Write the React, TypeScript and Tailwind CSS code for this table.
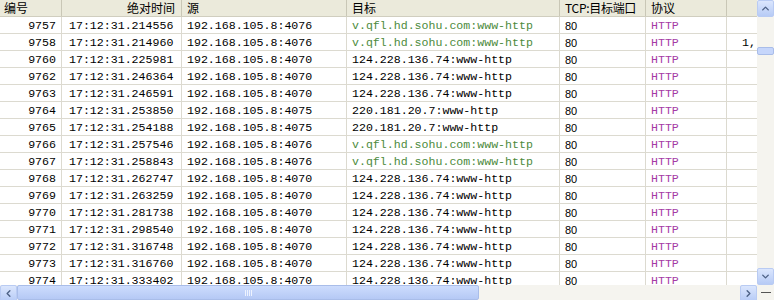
import { ChevronUp, ChevronDown, ChevronLeft, ChevronRight } from 'lucide-react'

type Row = {
  no: string
  time: string
  src: string
  dst: string
  green?: boolean
  extra?: string
}

const rows: Row[] = [
  { no: '9757', time: '17:12:31.214556', src: '192.168.105.8:4076', dst: 'v.qfl.hd.sohu.com:www-http', green: true },
  { no: '9758', time: '17:12:31.214960', src: '192.168.105.8:4076', dst: 'v.qfl.hd.sohu.com:www-http', green: true, extra: '1,' },
  { no: '9760', time: '17:12:31.225981', src: '192.168.105.8:4070', dst: '124.228.136.74:www-http' },
  { no: '9762', time: '17:12:31.246364', src: '192.168.105.8:4070', dst: '124.228.136.74:www-http' },
  { no: '9763', time: '17:12:31.246591', src: '192.168.105.8:4070', dst: '124.228.136.74:www-http' },
  { no: '9764', time: '17:12:31.253850', src: '192.168.105.8:4075', dst: '220.181.20.7:www-http' },
  { no: '9765', time: '17:12:31.254188', src: '192.168.105.8:4075', dst: '220.181.20.7:www-http' },
  { no: '9766', time: '17:12:31.257546', src: '192.168.105.8:4076', dst: 'v.qfl.hd.sohu.com:www-http', green: true },
  { no: '9767', time: '17:12:31.258843', src: '192.168.105.8:4076', dst: 'v.qfl.hd.sohu.com:www-http', green: true },
  { no: '9768', time: '17:12:31.262747', src: '192.168.105.8:4070', dst: '124.228.136.74:www-http' },
  { no: '9769', time: '17:12:31.263259', src: '192.168.105.8:4070', dst: '124.228.136.74:www-http' },
  { no: '9770', time: '17:12:31.281738', src: '192.168.105.8:4070', dst: '124.228.136.74:www-http' },
  { no: '9771', time: '17:12:31.298540', src: '192.168.105.8:4070', dst: '124.228.136.74:www-http' },
  { no: '9772', time: '17:12:31.316748', src: '192.168.105.8:4070', dst: '124.228.136.74:www-http' },
  { no: '9773', time: '17:12:31.316760', src: '192.168.105.8:4070', dst: '124.228.136.74:www-http' },
  { no: '9774', time: '17:12:31.333402', src: '192.168.105.8:4070', dst: '124.228.136.74:www-http' },
]

const mono = "font-['Liberation_Mono','DejaVu_Sans_Mono',monospace] text-[11.6px]"
const cjk = "font-['Noto_Sans_CJK_SC','Liberation_Sans',sans-serif] text-[12px]"
const cell = 'h-full pt-[1px] border-r border-[#dcdad0] shrink-0 overflow-hidden whitespace-nowrap'

function ArrowBtn({ children }: { children: React.ReactNode }) {
  return (
    <div className="w-[17px] h-[17px] shrink-0 rounded-[2px] border border-[#b9cbf3] bg-gradient-to-b from-[#dbe6fd] to-[#b7cbf6] flex items-center justify-center text-[#4d6185]">
      {children}
    </div>
  )
}

export default function App() {
  return (
    <div className="w-[774px] h-[300px] bg-white flex flex-col overflow-hidden text-black">
      <div className="flex h-[285px]">
        <div className="flex-1 overflow-hidden">
          {/* header */}
          <div className={`flex h-[17px] bg-[#ebeadb] border-b border-[#d0cebf] ${cjk} leading-[16px]`}>
            <div className="w-[62px] shrink-0 pl-[4px] border-r border-[#c9c7b6]">编号</div>
            <div className="w-[120px] shrink-0 pr-[6px] text-right border-r border-[#c9c7b6]">绝对时间</div>
            <div className="w-[165px] shrink-0 pl-[5px] border-r border-[#c9c7b6]">源</div>
            <div className="w-[213px] shrink-0 pl-[5px] border-r border-[#c9c7b6]">目标</div>
            <div className="w-[86px] shrink-0 pl-[5px] border-r border-[#c9c7b6] tracking-[-0.3px]">TCP:目标端口</div>
            <div className="w-[81px] shrink-0 pl-[5px] border-r border-[#c9c7b6]">协议</div>
            <div className="flex-1" />
          </div>
          {/* rows */}
          {rows.map((r) => (
            <div key={r.no} className="flex h-[17px] border-b border-[#dcdad0] leading-[16px]">
              <div className={`${cell} w-[62px] text-right pr-[5px] ${mono}`}>{r.no}</div>
              <div className={`${cell} w-[120px] pl-[7px] ${mono}`}>{r.time}</div>
              <div className={`${cell} w-[165px] pl-[5px] ${mono}`}>{r.src}</div>
              <div className={`${cell} w-[213px] pl-[5px] ${mono} ${r.green ? 'text-[#4c8a3c]' : ''}`}>{r.dst}</div>
              <div className={`${cell} w-[86px] pl-[5px] font-['Liberation_Sans',sans-serif] text-[11px]`}>80</div>
              <div className={`${cell} w-[81px] pl-[5px] ${mono} text-[#a53aa5]`}>HTTP</div>
              <div className={`flex-1 pt-[1px] text-right pr-[1px] ${mono} whitespace-nowrap`}>{r.extra ?? ''}</div>
            </div>
          ))}
        </div>
        {/* vertical scrollbar */}
        <div className="w-[17px] shrink-0 bg-[#f5f4ef] flex flex-col">
          <ArrowBtn>
            <ChevronUp size={11} strokeWidth={3} />
          </ArrowBtn>
          <div className="flex-1 flex flex-col pt-[30px]">
            <div className="h-[8px] rounded-[2px] border border-[#a9bde9] bg-[#c6d6fb]" />
          </div>
          <ArrowBtn>
            <ChevronDown size={11} strokeWidth={3} />
          </ArrowBtn>
        </div>
      </div>
      {/* horizontal scrollbar */}
      <div className="flex h-[15px]">
        <div className="flex-1 flex bg-[#f5f4ef]">
          <ArrowBtn>
            <ChevronLeft size={11} strokeWidth={3} />
          </ArrowBtn>
          <div className="w-[462px] h-[15px] rounded-[2px] border border-[#a9bde9] bg-gradient-to-b from-[#cddcfd] to-[#b5c9f5] flex items-center justify-center">
            <div className="flex gap-[1px]">
              <div className="w-[1px] h-[6px] bg-[#eef3fe]" />
              <div className="w-[1px] h-[6px] bg-[#eef3fe]" />
              <div className="w-[1px] h-[6px] bg-[#eef3fe]" />
              <div className="w-[1px] h-[6px] bg-[#eef3fe]" />
            </div>
          </div>
          <div className="flex-1" />
          <ArrowBtn>
            <ChevronRight size={11} strokeWidth={3} />
          </ArrowBtn>
        </div>
        <div className="w-[17px] shrink-0 bg-[#f5f4ef] flex items-center justify-center">
          <div className="w-[10px] h-[1px] bg-[#555]" />
        </div>
      </div>
    </div>
  )
}
